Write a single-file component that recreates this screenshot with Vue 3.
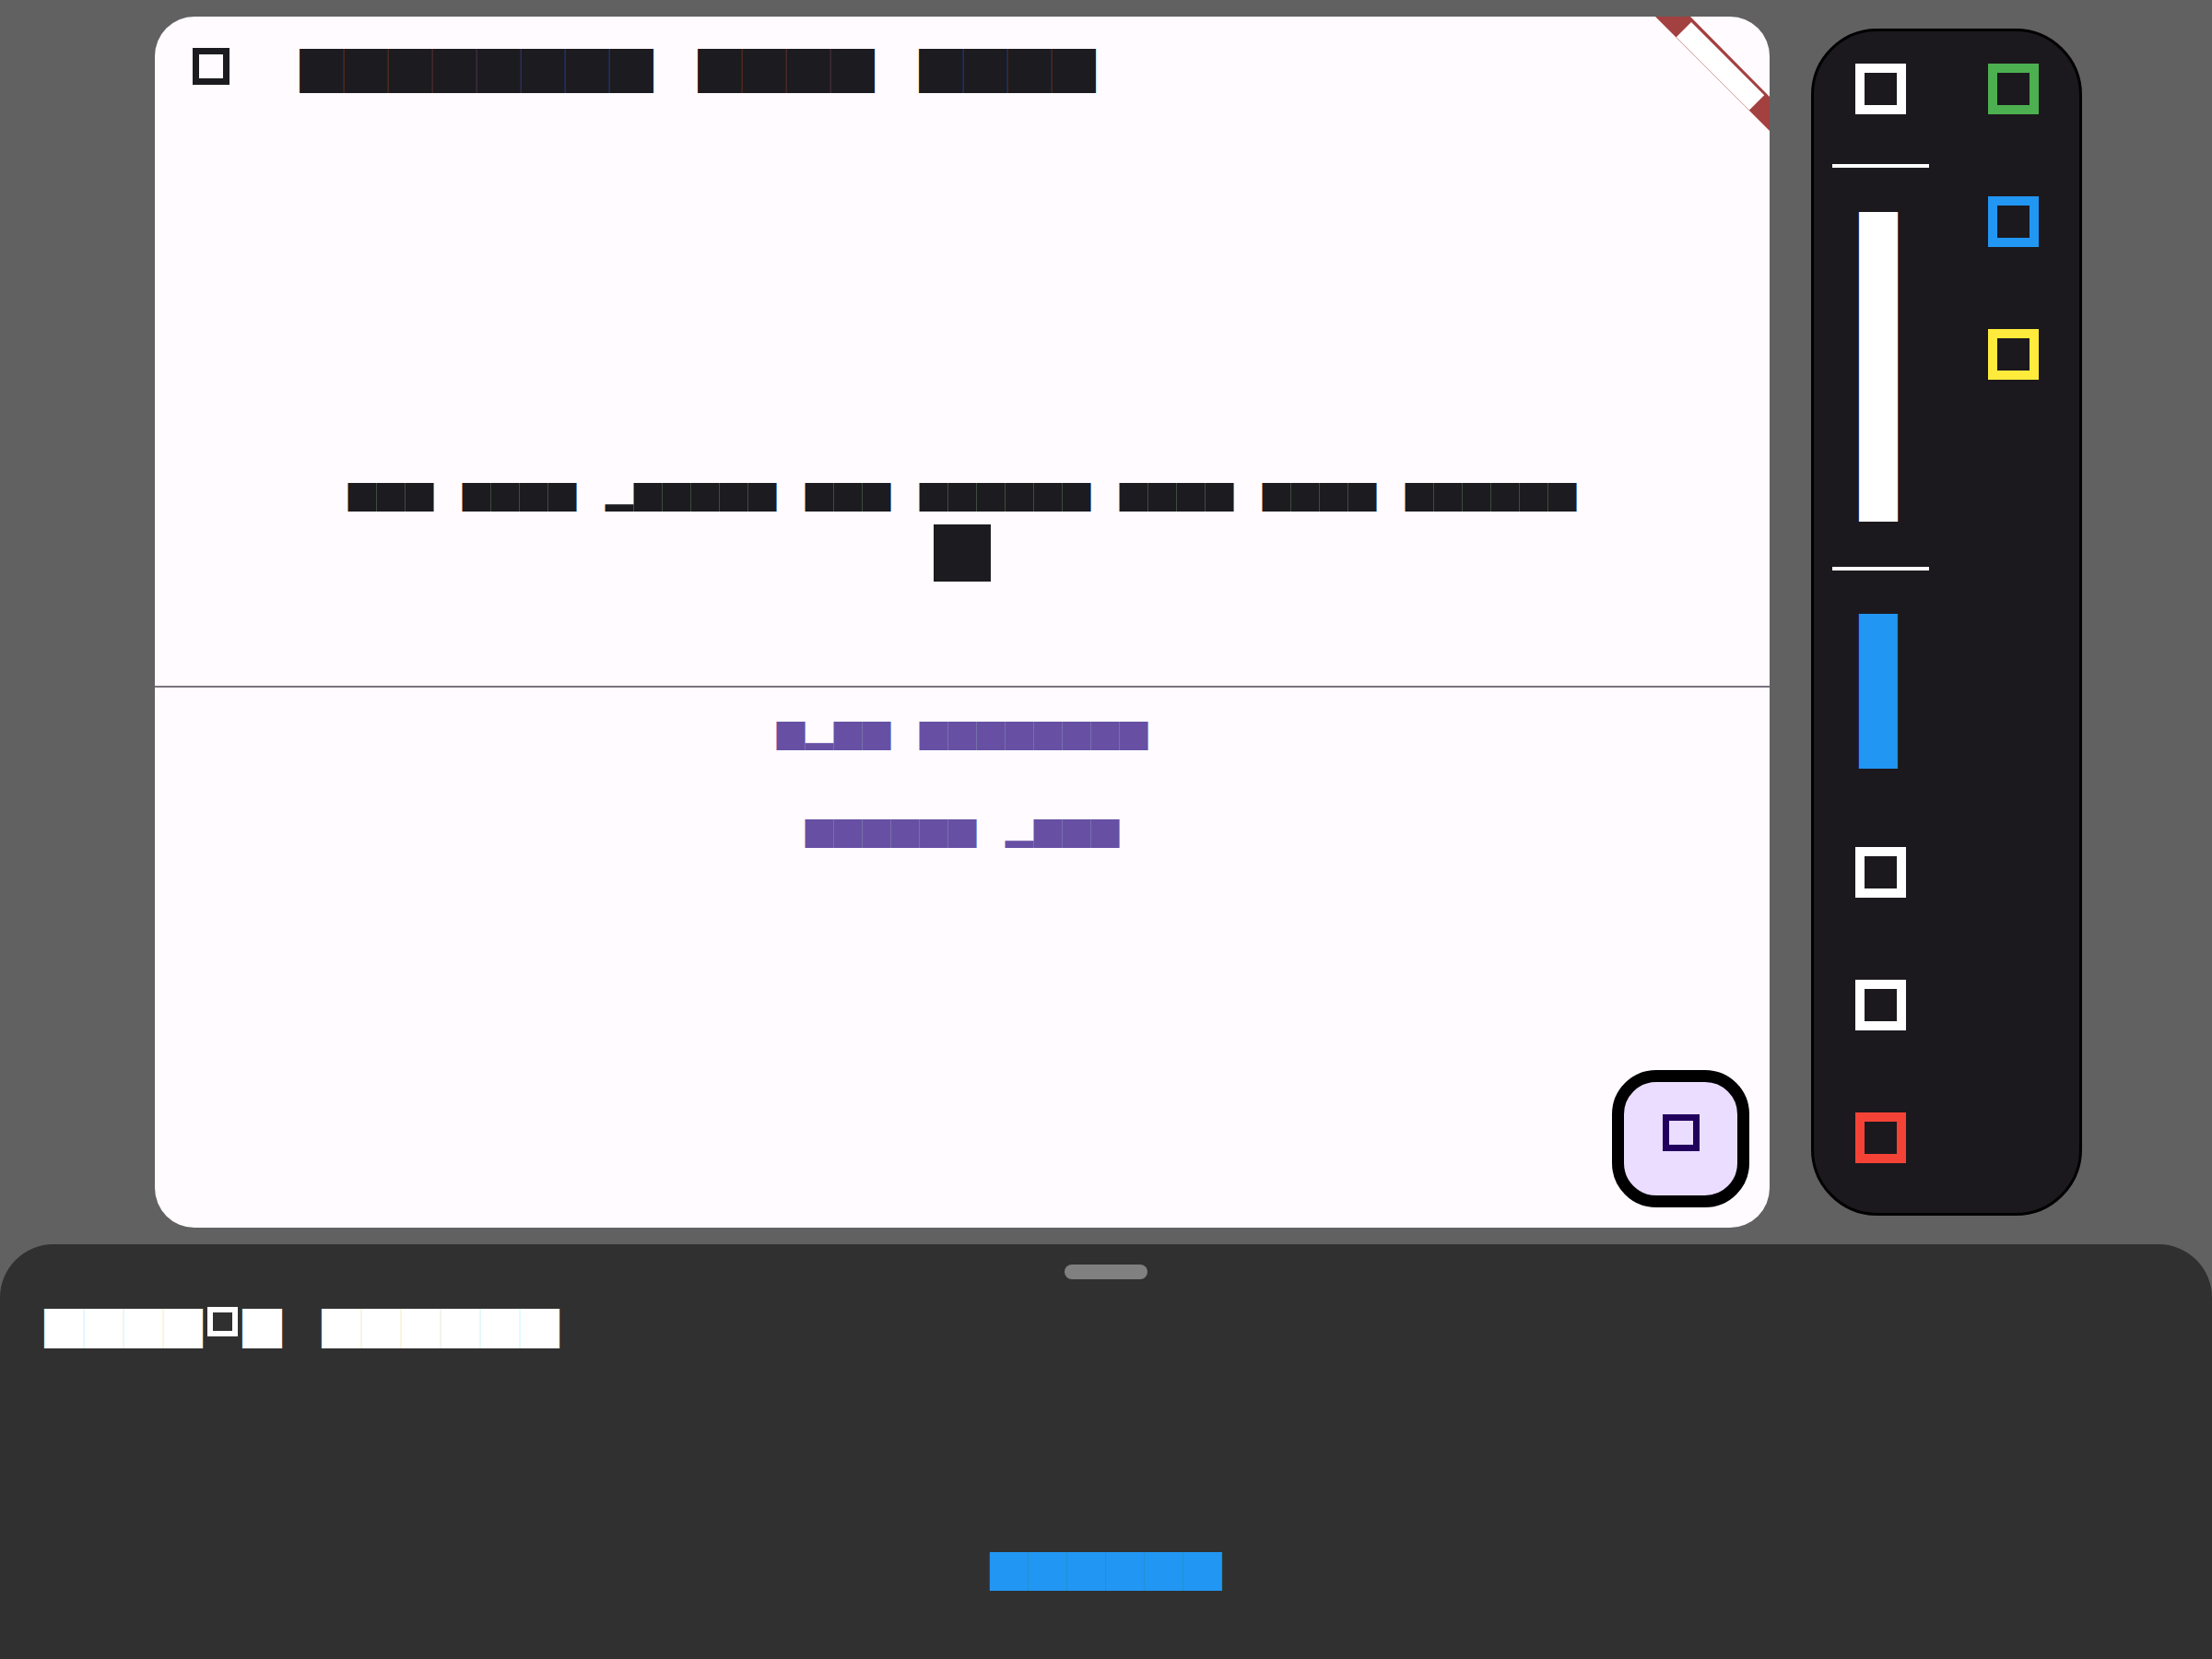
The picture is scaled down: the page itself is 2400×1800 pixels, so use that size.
<script setup>
const title = '████████　████　████'
const message = '███　████　▂█████　███　██████　████　████　██████'
const count = '█'
const links = ['█▂██　████████', '██████　▂███']
const shortcuts = [
  { name: 'Accept', tone: 'green' },
  { name: 'Info', tone: 'blue' },
  { name: 'Highlight', tone: 'yellow' },
]
const actions = [
  { name: 'Previous', tone: 'white' },
  { name: 'Next', tone: 'white' },
  { name: 'Close', tone: 'red' },
]
</script>

<template>
  <div class="page">
    <div class="stage">
      <main class="screen">
        <header class="app-bar">
          <button class="menu" aria-label="Menu"><span class="box box-small"></span></button>
          <h1 class="title">{{ title }}</h1>
        </header>

        <section class="counter">
          <p class="message">{{ message }}</p>
          <output class="count">{{ count }}</output>
        </section>

        <nav class="links">
          <button v-for="link in links" :key="link" class="link">{{ link }}</button>
        </nav>

        <svg class="ribbon" viewBox="0 0 124 124" aria-hidden="true">
          <path d="M0 0H38L124 87V124Z" fill="#a34040" />
          <rect width="112" height="23" fill="#fff" transform="translate(39 6) rotate(45)" />
        </svg>

        <button class="fab" aria-label="Add"><span class="box box-small"></span></button>
      </main>

      <aside class="toolbar">
        <div class="tools">
          <button class="tool white" aria-label="Tools"><span class="box"></span></button>
          <hr class="rule rule-first" />
          <button class="label label-long white">████████</button>
          <hr class="rule" />
          <button class="label label-short blue">████</button>
          <div class="actions">
            <button v-for="a in actions" :key="a.name" class="tool" :class="a.tone" :aria-label="a.name">
              <span class="box"></span>
            </button>
          </div>
        </div>
        <div class="tools shortcuts">
          <button v-for="s in shortcuts" :key="s.name" class="tool" :class="s.tone" :aria-label="s.name">
            <span class="box"></span>
          </button>
        </div>
      </aside>
    </div>

    <section class="sheet">
      <div class="handle"></div>
      <h2 class="sheet-title">
        <span>████</span><span class="cell"><span class="box box-tiny"></span></span><span>█　██████</span>
      </h2>
      <button class="sheet-action">██████</button>
    </section>
  </div>
</template>

<style>
body {
  margin: 0;
  background: #616161;
}
</style>

<style scoped>
.page {
  display: flex;
  flex-direction: column;
  min-height: 100vh;
  background: #616161;
  font-family: "Noto Sans CJK JP", sans-serif;
  line-height: 1;
}

button {
  padding: 0;
  border: 0;
  background: none;
  color: inherit;
  font: inherit;
  cursor: pointer;
}

h1,
h2,
p {
  margin: 0;
  font-weight: 400;
}

.stage {
  display: flex;
  flex: 1;
  gap: 45px;
  padding: 18px 141px 18px 168px;
}

.screen {
  position: relative;
  display: flex;
  flex: 1;
  flex-direction: column;
  overflow: hidden;
  border-radius: 43px;
  background: #fffbff;
  color: #1c1b1f;
}

.app-bar {
  display: flex;
  align-items: flex-start;
  gap: 76px;
  height: 134px;
  padding: 34px 41px 0;
}

.menu {
  display: flex;
}

.title {
  font-size: 48px;
  line-height: 44px;
  white-space: nowrap;
}

.counter {
  display: flex;
  flex-direction: column;
  align-items: center;
  justify-content: flex-end;
  gap: 13px;
  height: 442px;
  padding-bottom: 116px;
  border-bottom: 2px solid #79747e;
}

.message {
  font-size: 31px;
  white-space: nowrap;
}

.count {
  font-size: 62px;
}

.links {
  display: flex;
  flex-direction: column;
  align-items: center;
  gap: 75px;
  padding-top: 35px;
  color: #6750a4;
  font-size: 31px;
}

.ribbon {
  position: absolute;
  top: 0;
  right: 0;
  width: 124px;
  height: 124px;
}

.fab {
  position: absolute;
  right: 22px;
  bottom: 22px;
  display: flex;
  justify-content: center;
  box-sizing: border-box;
  width: 149px;
  height: 149px;
  padding-top: 35px;
  border: 13px solid #000;
  border-radius: 48px;
  background: #eaddff;
  color: #21005d;
}

.box {
  display: block;
  box-sizing: border-box;
  width: 55px;
  height: 55px;
  border: 10px solid currentColor;
}

.box-small {
  width: 40px;
  height: 40px;
  border-width: 7px;
}

.box-tiny {
  width: 33px;
  height: 32px;
  border-width: 6px;
}

.toolbar {
  display: flex;
  margin: 13px 0;
  border: 3px solid #000;
  border-radius: 72px;
  background: #1c191e;
}

.tools {
  display: flex;
  flex-direction: column;
  align-items: center;
  width: 144px;
  padding: 35px 0 54px;
}

.shortcuts,
.actions {
  display: flex;
  flex-direction: column;
  gap: 89px;
}

.actions {
  margin-top: 84px;
}

.rule {
  width: 105px;
  height: 4px;
  margin: 47px 0 46px;
  border: 0;
  background: #fff;
}

.rule-first {
  margin-top: 54px;
}

.label {
  font-size: 42px;
  writing-mode: vertical-rl;
}

.label-long {
  height: 340px;
}

.label-short {
  height: 170px;
}

.white {
  color: #fff;
}

.green {
  color: #4caf50;
}

.blue {
  color: #2196f3;
}

.yellow {
  color: #ffeb3b;
}

.red {
  color: #f44336;
}

.sheet {
  display: flex;
  flex-direction: column;
  align-items: center;
  padding: 22px 48px 76px;
  border-radius: 58px 58px 0 0;
  background: #303030;
}

.handle {
  width: 90px;
  height: 16px;
  border-radius: 8px;
  background: #808080;
}

.sheet-title {
  display: flex;
  align-self: stretch;
  margin-top: 30px;
  color: #fff;
  font-size: 43px;
  white-space: nowrap;
}

.cell {
  display: flex;
  justify-content: center;
  width: 43px;
}

.sheet-action {
  margin-top: 221px;
  color: #2196f3;
  font-size: 42px;
}
</style>
